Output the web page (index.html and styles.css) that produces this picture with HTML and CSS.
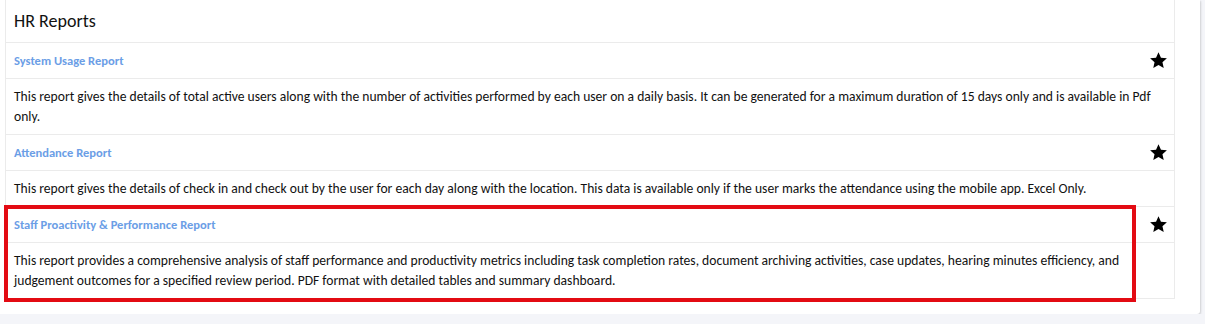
FILE: index.html
```html
<!DOCTYPE html>
<html lang="en">
  <head>
    <meta charset="UTF-8" />
    <meta name="viewport" content="width=device-width, initial-scale=1.0" />
    <title>HR Reports</title>
    <link rel="stylesheet" href="styles.css">
  </head>
  <body>
    <div class="card">
      <div class="reports">
        <div class="title">HR Reports</div>

        <div class="report-head">
          <a href="#" class="report-link">System Usage Report</a>
          <svg class="star" viewBox="0 0 24 24"><polygon points="12,1.5 15.1,8.4 22.6,9.2 17,14.2 18.6,21.6 12,17.8 5.4,21.6 7,14.2 1.4,9.2 8.9,8.4"/></svg>
        </div>
        <div class="report-desc">This report gives the details of total active users along with the number of activities performed by each user on a daily basis. It can be generated for a maximum duration of 15 days only and is available in Pdf only.</div>

        <div class="report-head">
          <a href="#" class="report-link">Attendance Report</a>
          <svg class="star" viewBox="0 0 24 24"><polygon points="12,1.5 15.1,8.4 22.6,9.2 17,14.2 18.6,21.6 12,17.8 5.4,21.6 7,14.2 1.4,9.2 8.9,8.4"/></svg>
        </div>
        <div class="report-desc">This report gives the details of check in and check out by the user for each day along with the location. This data is available only if the user marks the attendance using the mobile app. Excel Only.</div>

        <div class="report-head">
          <a href="#" class="report-link">Staff Proactivity &amp; Performance Report</a>
          <svg class="star" viewBox="0 0 24 24"><polygon points="12,1.5 15.1,8.4 22.6,9.2 17,14.2 18.6,21.6 12,17.8 5.4,21.6 7,14.2 1.4,9.2 8.9,8.4"/></svg>
        </div>
        <div class="report-desc last">This report provides a comprehensive analysis of staff performance and productivity metrics including task completion rates, document archiving activities, case updates, hearing minutes efficiency, and judgement outcomes for a specified review period. PDF format with detailed tables and summary dashboard.</div>
      </div>
      <div class="highlight"></div>
    </div>
  </body>
</html>
```
FILE: styles.css
```css
body {
  margin: 0;
  background: #f4f5f9;
  font-family: Carlito, Lato, "Liberation Sans", sans-serif;
  color: #111;
}
.card {
  position: relative;
  width: 1200px;
  height: 314px;
  background: #fff;
  box-shadow: 1px 1px 2px rgba(0, 0, 0, 0.15);
  border-radius: 0 0 3px 0;
}
.reports {
  margin-left: 5px;
  width: 1168px;
  border: 1px solid #ebebeb;
  border-top: 0;
}
.title {
  height: 42px;
  padding: 0 8px;
  font-size: 18px;
  line-height: 42px;
  border-bottom: 1px solid #ebebeb;
}
.report-head {
  display: flex;
  align-items: center;
  justify-content: space-between;
  height: 35px;
  padding: 0 6px 0 8px;
  border-bottom: 1px solid #ebebeb;
}
.report-link {
  color: #6b9ee6;
  font-size: 12.5px;
  font-weight: bold;
  text-decoration: none;
}
.star {
  width: 19px;
  height: 19px;
  fill: #000;
}
.report-desc {
  padding: 8px 8px 7px;
  font-size: 13.6px;
  line-height: 20px;
  border-bottom: 1px solid #ebebeb;
}
.report-desc.last {
  border-bottom: 0;
}
.highlight {
  position: absolute;
  left: 4px;
  top: 205px;
  width: 1124px;
  height: 89px;
  border: 4px solid #e30b13;
}
```
